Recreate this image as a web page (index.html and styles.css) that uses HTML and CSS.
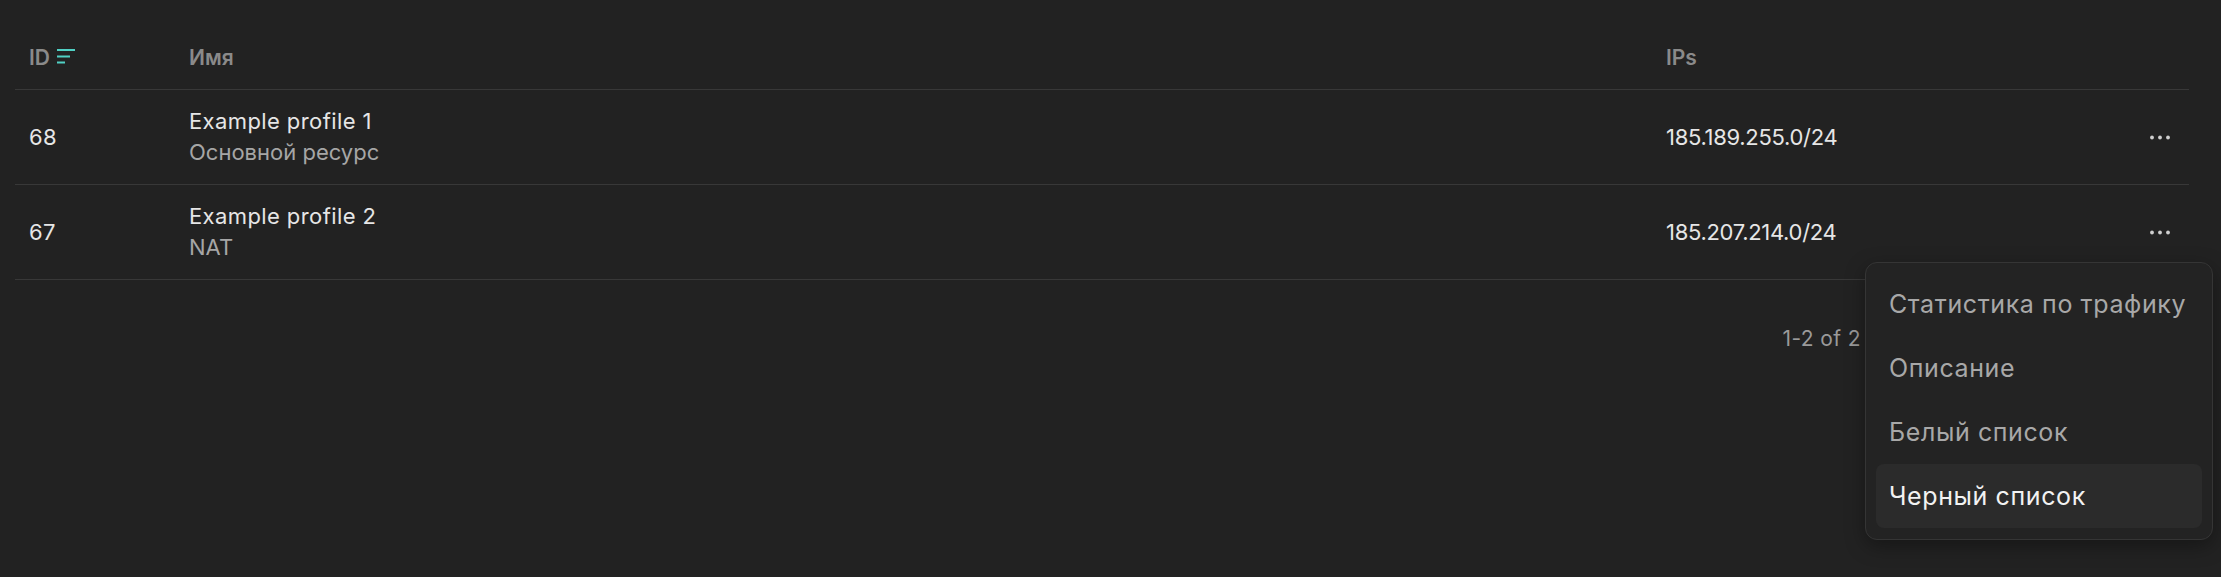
FILE: index.html
```html
<!DOCTYPE html>
<html lang="ru">
<head>
<meta charset="utf-8">
<link rel="stylesheet" href="styles.css">
</head>
<body>
<div class="page">
  <div class="table">
    <div class="row head">
      <div class="cell id-head">ID
        <svg class="sort" width="20" height="16" viewBox="0 0 20 16"><path d="M1 2h18M1 8.5h13M1 14.5h8" stroke="#50d0c4" stroke-width="2.2" fill="none"/></svg>
      </div>
      <div class="cell">Имя</div>
      <div class="cell">IPs</div>
      <div class="cell"></div>
    </div>
    <div class="row">
      <div class="cell">68</div>
      <div class="cell name"><span class="title">Example profile 1</span><span class="sub">Основной ресурс</span></div>
      <div class="cell ip">185.189.255.0/24</div>
      <div class="cell act"><svg width="20" height="5" viewBox="0 0 20 5"><circle cx="2" cy="2.5" r="1.9" fill="#cfcfcf"/><circle cx="10" cy="2.5" r="1.9" fill="#cfcfcf"/><circle cx="18" cy="2.5" r="1.9" fill="#cfcfcf"/></svg></div>
    </div>
    <div class="row">
      <div class="cell">67</div>
      <div class="cell name"><span class="title">Example profile 2</span><span class="sub">NAT</span></div>
      <div class="cell ip">185.207.214.0/24</div>
      <div class="cell act"><svg width="20" height="5" viewBox="0 0 20 5"><circle cx="2" cy="2.5" r="1.9" fill="#cfcfcf"/><circle cx="10" cy="2.5" r="1.9" fill="#cfcfcf"/><circle cx="18" cy="2.5" r="1.9" fill="#cfcfcf"/></svg></div>
    </div>
  </div>
  <div class="pager">1-2 of 2</div>
  <div class="menu">
    <div class="item">Статистика по трафику</div>
    <div class="item">Описание</div>
    <div class="item">Белый список</div>
    <div class="item active">Черный список</div>
  </div>
</div>
</body>
</html>
```
FILE: styles.css
```css
html, body {
  margin: 0;
  background: #222222;
  font-family: Inter, "Noto Sans", sans-serif;
  color: #e6e6e6;
}
.page {
  position: relative;
  height: 577px;
  padding: 26px 32px 0 15px;
  box-sizing: border-box;
}
.table {
  display: flex;
  flex-direction: column;
}
.row {
  display: grid;
  grid-template-columns: 160px 1477px 478px 59px;
  height: 95px;
  border-bottom: 1px solid #383838;
  box-sizing: border-box;
  align-items: center;
  font-size: 22px;
  letter-spacing: 0.4px;
}
.row.head {
  height: 64px;
  color: #8a8a8a;
  font-weight: 600;
  font-size: 21px;
  letter-spacing: 0;
}
.cell {
  padding-left: 14px;
  display: flex;
  align-items: center;
}
.id-head {
  gap: 6px;
}
.sort {
  margin-top: -3px;
}
.name {
  flex-direction: column;
  align-items: flex-start;
  line-height: 31px;
}
.sub {
  color: #a6a6a6;
  letter-spacing: 0;
}
.ip {
  letter-spacing: -0.3px;
}
.act {
  padding-left: 20px;
}
.pager {
  display: flex;
  justify-content: flex-end;
  padding-right: 328px;
  margin-top: 44px;
  line-height: 30px;
  font-size: 21px;
  letter-spacing: 0.4px;
  color: #9a9a9a;
}
.menu {
  position: absolute;
  left: 1865px;
  top: 262px;
  width: 348px;
  box-sizing: border-box;
  padding: 9px 10px 11px;
  background: #232323;
  border: 1px solid #353535;
  border-radius: 12px;
  box-shadow: 0 6px 20px rgba(0, 0, 0, 0.35);
  display: flex;
  flex-direction: column;
}
.item {
  height: 64px;
  display: flex;
  align-items: center;
  padding-left: 13px;
  font-size: 25px;
  letter-spacing: 0.6px;
  color: #a8a8a8;
  border-radius: 8px;
  white-space: nowrap;
}
.item.active {
  background: #2b2b2b;
  color: #f2f2f2;
}
```
